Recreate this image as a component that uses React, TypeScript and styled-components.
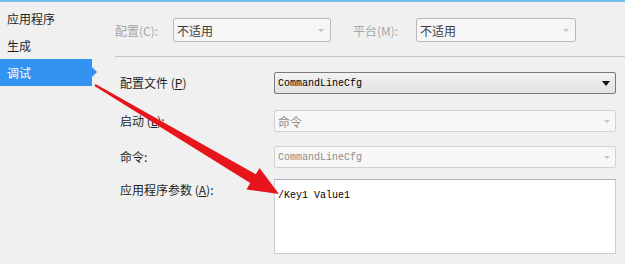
import styled, { createGlobalStyle } from "styled-components";

const GlobalStyle = createGlobalStyle`
  html, body {
    margin: 0;
    padding: 0;
    background: #f0f0f0;
  }
  body {
    font-family: "Noto Sans CJK SC", "Noto Sans", sans-serif;
    font-size: 12px;
    color: #1e1e1e;
  }
`;

const Page = styled.div`
  position: relative;
  width: 625px;
  height: 264px;
  overflow: hidden;
  background: #f0f0f0;
  border-top: 2px solid #74bdea;
  box-sizing: border-box;
  display: flex;
`;

const Sidebar = styled.nav`
  width: 98px;
  padding-top: 3px;
  display: flex;
  flex-direction: column;
`;

const NavItem = styled.div<{ $active?: boolean }>`
  position: relative;
  width: 92px;
  height: 27px;
  line-height: 27px;
  padding-left: 7px;
  box-sizing: border-box;
  font-size: 12px;
  color: ${(p) => (p.$active ? "#ffffff" : "#1e1e1e")};
  background: ${(p) => (p.$active ? "#3393f0" : "transparent")};

  &::after {
    content: "";
    display: ${(p) => (p.$active ? "block" : "none")};
    position: absolute;
    right: -5px;
    top: 8px;
    border-left: 5px solid #3393f0;
    border-top: 5px solid transparent;
    border-bottom: 5px solid transparent;
  }
`;

const Main = styled.main`
  flex: 1;
  display: flex;
  flex-direction: column;
`;

const TopBar = styled.div`
  display: flex;
  align-items: center;
  height: 24px;
  margin-top: 16px;
  margin-left: 17px;
  padding-bottom: 14px;
  border-bottom: 1px solid #c4c4c4;
`;

const TopLabel = styled.span<{ $width: number }>`
  width: ${(p) => p.$width}px;
  color: #a6a6a6;
  font-size: 12px;
`;

const TopSelect = styled.div<{ $width: number; $gap?: number }>`
  width: ${(p) => p.$width}px;
  height: 24px;
  margin-right: ${(p) => p.$gap ?? 0}px;
  box-sizing: border-box;
  border: 1px solid #b9b9b9;
  border-radius: 2px;
  background: #f6f6f6;
  display: flex;
  align-items: center;
  justify-content: space-between;
  padding: 0 6px 0 3px;
  color: #3c3c3c;
  font-size: 12px;
`;

const Form = styled.div`
  display: grid;
  grid-template-columns: 154px 342px;
  margin-left: 22px;
`;

const Label = styled.div<{ $top: number; $pad: number }>`
  margin-top: ${(p) => p.$top}px;
  padding-top: ${(p) => p.$pad}px;
  font-size: 12px;
  color: #1e1e1e;
  line-height: 16px;
`;

const Field = styled.div<{ $top: number; $enabled?: boolean }>`
  margin-top: ${(p) => p.$top}px;
  height: 22px;
  box-sizing: border-box;
  border: 1px solid ${(p) => (p.$enabled ? "#7a7a7a" : "#d2d2d2")};
  border-radius: 2px;
  background: ${(p) =>
    p.$enabled ? "linear-gradient(#f3f3f3, #e1e1e1)" : "#f7f7f7"};
  display: flex;
  align-items: center;
  justify-content: space-between;
  padding: 0 5px 0 3px;
  color: ${(p) => (p.$enabled ? "#000" : "#8d8d8d")};
`;

const Mono = styled.span`
  font-family: "Liberation Mono", monospace;
  font-size: 10px;
`;

const Caret = styled.span<{ $dark?: boolean }>`
  width: 0;
  height: 0;
  border-left: ${(p) => (p.$dark ? 4 : 3)}px solid transparent;
  border-right: ${(p) => (p.$dark ? 4 : 3)}px solid transparent;
  border-top: ${(p) => (p.$dark ? 5 : 3)}px solid
    ${(p) => (p.$dark ? "#111" : "#c2c2c2")};
`;

const TextArea = styled.div`
  margin-top: 11px;
  height: 75px;
  box-sizing: border-box;
  border: 1px solid #c5cdd6;
  border-top-color: #aab6c3;
  background: #ffffff;
  padding: 4px 3px;
  color: #000;
`;

const Overlay = styled.svg`
  position: absolute;
  left: 0;
  top: 0;
  pointer-events: none;
`;

function Key({ k }: { k: string }) {
  return (
    <>
      (<u>{k}</u>)
    </>
  );
}

export default function App() {
  return (
    <>
      <GlobalStyle />
      <Page>
        <Sidebar>
          <NavItem>应用程序</NavItem>
          <NavItem>生成</NavItem>
          <NavItem $active>调试</NavItem>
        </Sidebar>
        <Main>
          <TopBar>
            <TopLabel $width={58}>配置(C):</TopLabel>
            <TopSelect $width={158} $gap={22}>
              不适用
              <Caret />
            </TopSelect>
            <TopLabel $width={63}>平台(M):</TopLabel>
            <TopSelect $width={160}>
              不适用
              <Caret />
            </TopSelect>
          </TopBar>
          <Form>
            <Label $top={15} $pad={3}>
              配置文件 <Key k="P" />
            </Label>
            <Field $top={15} $enabled>
              <Mono>CommandLineCfg</Mono>
              <Caret $dark />
            </Field>
            <Label $top={16} $pad={3}>
              启动 <Key k="L" />:
            </Label>
            <Field $top={16}>
              命令
              <Caret />
            </Field>
            <Label $top={14} $pad={3}>
              命令:
            </Label>
            <Field $top={14}>
              <Mono>CommandLineCfg</Mono>
              <Caret />
            </Field>
            <Label $top={11} $pad={3}>
              应用程序参数 <Key k="A" />:
            </Label>
            <TextArea>
              <Mono>/Key1 Value1</Mono>
            </TextArea>
          </Form>
        </Main>
        <Overlay width="625" height="264" viewBox="0 0 625 264">
          <polygon
            fill="#e8141b"
            points="95.5,82.1 255.8,172.3 259.5,166 279,192 246.5,187.5 250.2,181 94.5,83.9"
          />
        </Overlay>
      </Page>
    </>
  );
}
